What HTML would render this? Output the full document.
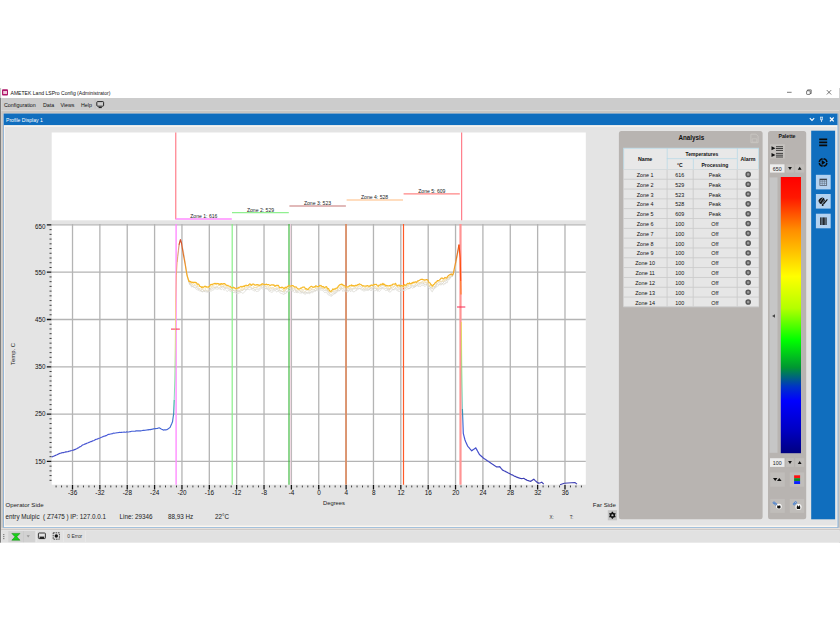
<!DOCTYPE html>
<html><head><meta charset="utf-8"><title>AMETEK Land LSPro Config (Administrator)</title>
<style>
html,body{margin:0;padding:0;background:#fff;}
body{width:840px;height:630px;position:relative;overflow:hidden;font-family:"Liberation Sans",sans-serif;}
.t{position:absolute;white-space:nowrap;}
.r{position:absolute;}
svg{position:absolute;left:0;top:0;}
</style></head><body>
<svg width="840" height="630" viewBox="0 0 840 630">
<rect x="0.00" y="88.00" width="840.00" height="455.00" fill="#ffffff"/>
<rect x="839.30" y="88.00" width="0.70" height="455.00" fill="#c0c0c0"/>
<rect x="0.00" y="88.00" width="1.10" height="9.80" fill="#c6c8c6"/>
<rect x="0.00" y="97.80" width="1.10" height="444.90" fill="#7e7e7e"/>
<g>
<rect x="2" y="89.3" width="6" height="6.3" rx="1" fill="#b0186a"/><rect x="3.2" y="91" width="3.8" height="3" fill="#f0c8dc"/>
</g>
<g fill="none" stroke="#222" stroke-width="0.6">
<path d="M787 92.3h4.6"/><rect x="806.6" y="90.8" width="3.6" height="3.6" rx="0.6"/><path d="M807.6 90.8v-0.9h3.6v3.6h-1"/><path d="M826.8 90.1l4.4 4.4M831.2 90.1l-4.4 4.4"/>
</g>
<rect x="1.20" y="98.00" width="838.80" height="12.00" fill="#cccccc"/>
<rect x="1.20" y="110.30" width="838.80" height="3.70" fill="#c9c6c3"/>
<rect x="94.80" y="99.00" width="0.50" height="10.00" fill="#b8b8b8"/>
<g fill="none" stroke="#111" stroke-width="0.9">
<rect x="96.8" y="101.6" width="6.8" height="4.6" rx="0.8"/><path d="M98.6 107.6h3.2" stroke-width="1"/>
</g>
<rect x="1.20" y="113.60" width="838.80" height="416.40" fill="#c9c6c3"/>
<rect x="3.20" y="113.80" width="835.20" height="414.20" fill="#7aaad8"/>
<rect x="3.90" y="113.80" width="833.60" height="413.40" fill="#fbf6f0"/>
<rect x="3.90" y="113.60" width="833.60" height="11.50" fill="#106ebe"/>
<rect x="4.80" y="126.80" width="832.00" height="398.80" fill="#e4e4e4"/>
<g fill="none" stroke="#fff" stroke-width="0.9">
<path d="M809.8 118.1l2.2 2.3l2.2-2.3" stroke-width="1.1"/><path d="M820 117.2h3M820.4 119.8h2.2M821.5 119.8v2.2M820.7 117.2v2.6M822.3 117.2v2.6" stroke-width="0.7"/><path d="M829.9 117.5l3.8 3.8M833.7 117.5l-3.8 3.8" stroke-width="1.2"/>
</g>
<rect x="51.70" y="132.50" width="534.10" height="87.80" fill="#fff"/>
<rect x="51.70" y="224.00" width="534.10" height="260.70" fill="#fff"/>
<g>
<defs><linearGradient id="pal" gradientUnits="userSpaceOnUse" x1="0" y1="225" x2="0" y2="484.7">
<stop offset="0" stop-color="#cc4028"/><stop offset="0.06" stop-color="#d24c2c"/><stop offset="0.135" stop-color="#ea8628"/><stop offset="0.19" stop-color="#f4aa26"/><stop offset="0.225" stop-color="#f7b726"/><stop offset="0.27" stop-color="#f5c230"/><stop offset="0.36" stop-color="#f0e040"/>
<stop offset="0.475" stop-color="#b0e840"/><stop offset="0.59" stop-color="#40d860"/><stop offset="0.69" stop-color="#30b0a0"/><stop offset="0.76" stop-color="#4070d0"/>
<stop offset="0.81" stop-color="#4858d8"/><stop offset="1" stop-color="#3c3cb0"/></linearGradient></defs>
<path d="M72.51 224V484.7M99.87 224V484.7M127.23 224V484.7M154.59 224V484.7M181.95 224V484.7M209.31 224V484.7M236.67 224V484.7M264.03 224V484.7M291.39 224V484.7M318.75 224V484.7M346.11 224V484.7M373.47 224V484.7M400.83 224V484.7M428.19 224V484.7M455.55 224V484.7M482.91 224V484.7M510.27 224V484.7M537.63 224V484.7M564.99 224V484.7M51.7 461.40H585.8M51.7 414.10H585.8M51.7 366.80H585.8M51.7 319.50H585.8M51.7 272.20H585.8M51.7 224.90H585.8" stroke="#b4b4b4" stroke-width="1.3" fill="none"/>
<path d="M56.09 485.5v1.9M61.57 485.5v1.9M67.04 485.5v1.9M77.98 485.5v1.9M83.45 485.5v1.9M88.93 485.5v1.9M94.40 485.5v1.9M105.34 485.5v1.9M110.81 485.5v1.9M116.29 485.5v1.9M121.76 485.5v1.9M132.70 485.5v1.9M138.17 485.5v1.9M143.65 485.5v1.9M149.12 485.5v1.9M160.06 485.5v1.9M165.53 485.5v1.9M171.01 485.5v1.9M176.48 485.5v1.9M187.42 485.5v1.9M192.89 485.5v1.9M198.37 485.5v1.9M203.84 485.5v1.9M214.78 485.5v1.9M220.25 485.5v1.9M225.73 485.5v1.9M231.20 485.5v1.9M242.14 485.5v1.9M247.61 485.5v1.9M253.09 485.5v1.9M258.56 485.5v1.9M269.50 485.5v1.9M274.97 485.5v1.9M280.45 485.5v1.9M285.92 485.5v1.9M296.86 485.5v1.9M302.33 485.5v1.9M307.81 485.5v1.9M313.28 485.5v1.9M324.22 485.5v1.9M329.69 485.5v1.9M335.17 485.5v1.9M340.64 485.5v1.9M351.58 485.5v1.9M357.05 485.5v1.9M362.53 485.5v1.9M368.00 485.5v1.9M378.94 485.5v1.9M384.41 485.5v1.9M389.89 485.5v1.9M395.36 485.5v1.9M406.30 485.5v1.9M411.77 485.5v1.9M417.25 485.5v1.9M422.72 485.5v1.9M433.66 485.5v1.9M439.13 485.5v1.9M444.61 485.5v1.9M450.08 485.5v1.9M461.02 485.5v1.9M466.49 485.5v1.9M471.97 485.5v1.9M477.44 485.5v1.9M488.38 485.5v1.9M493.85 485.5v1.9M499.33 485.5v1.9M504.80 485.5v1.9M515.74 485.5v1.9M521.21 485.5v1.9M526.69 485.5v1.9M532.16 485.5v1.9M543.10 485.5v1.9M548.57 485.5v1.9M554.05 485.5v1.9M559.52 485.5v1.9M570.46 485.5v1.9M575.93 485.5v1.9M581.41 485.5v1.9M49.5 229.63h2.1M49.5 234.36h2.1M49.5 239.09h2.1M49.5 243.82h2.1M49.5 248.55h2.1M49.5 253.28h2.1M49.5 258.01h2.1M49.5 262.74h2.1M49.5 267.47h2.1M49.5 276.93h2.1M49.5 281.66h2.1M49.5 286.39h2.1M49.5 291.12h2.1M49.5 295.85h2.1M49.5 300.58h2.1M49.5 305.31h2.1M49.5 310.04h2.1M49.5 314.77h2.1M49.5 324.23h2.1M49.5 328.96h2.1M49.5 333.69h2.1M49.5 338.42h2.1M49.5 343.15h2.1M49.5 347.88h2.1M49.5 352.61h2.1M49.5 357.34h2.1M49.5 362.07h2.1M49.5 371.53h2.1M49.5 376.26h2.1M49.5 380.99h2.1M49.5 385.72h2.1M49.5 390.45h2.1M49.5 395.18h2.1M49.5 399.91h2.1M49.5 404.64h2.1M49.5 409.37h2.1M49.5 418.83h2.1M49.5 423.56h2.1M49.5 428.29h2.1M49.5 433.02h2.1M49.5 437.75h2.1M49.5 442.48h2.1M49.5 447.21h2.1M49.5 451.94h2.1M49.5 456.67h2.1M49.5 466.13h2.1M49.5 470.86h2.1M49.5 475.59h2.1M49.5 480.32h2.1" stroke="#3c3c3c" stroke-width="1.0" fill="none"/>
<path d="M72.51 485v4.4M99.87 485v4.4M127.23 485v4.4M154.59 485v4.4M181.95 485v4.4M209.31 485v4.4M236.67 485v4.4M264.03 485v4.4M291.39 485v4.4M318.75 485v4.4M346.11 485v4.4M373.47 485v4.4M400.83 485v4.4M428.19 485v4.4M455.55 485v4.4M482.91 485v4.4M510.27 485v4.4M537.63 485v4.4M564.99 485v4.4M46.8 224.90h4.6M46.8 272.20h4.6M46.8 319.50h4.6M46.8 366.80h4.6M46.8 414.10h4.6M46.8 461.40h4.6" stroke="#111" stroke-width="1.3" fill="none"/>
<path d="M175.8 132.5V219.3" stroke="#ff5c6c" stroke-width="0.95"/>
<path d="M461.7 132.5V220.3" stroke="#ff5c6c" stroke-width="0.95"/>
<path d="M175.6 219H231.8" stroke="#ff8cff" stroke-width="1.3"/>
<path d="M232 212.6H288.8" stroke="#90f090" stroke-width="1.1"/>
<path d="M289.4 206H345.9" stroke="#c06c6c" stroke-width="0.95"/>
<path d="M346.6 200H403" stroke="#ffbc80" stroke-width="1.2"/>
<path d="M403.6 193.8H459.8" stroke="#ff8686" stroke-width="1.2"/>
<path d="M176.1 224V484.7" stroke="#ff8cff" stroke-width="1.4"/>
<path d="M232.2 224V484.7" stroke="#88f088" stroke-width="1.2"/>
<path d="M289 224V484.7" stroke="#3cb83c" stroke-width="1.15"/>
<path d="M290.7 224V484.7" stroke="#f4d2e2" stroke-width="0.9"/>
<path d="M346 224V484.7" stroke="#e08454" stroke-width="1.5"/>
<path d="M403.5 224V484.7" stroke="#ff5a28" stroke-width="1.2"/>
<path d="M460.5 224V484.7" stroke="#ff9494" stroke-width="2.2"/>
<path d="M171 329.1H179.8" stroke="#f83058" stroke-width="1.05"/>
<path d="M457 307H465.3" stroke="#f83058" stroke-width="1.05"/>
<path d="M189.0 282.9L189.9 284.0L190.7 285.3L191.6 287.2L192.6 286.5L193.5 286.7L194.4 287.3L195.4 288.1L196.3 289.5L197.3 289.8L198.2 290.2L199.2 290.7L200.0 291.1L200.9 290.6L201.7 291.1L202.5 292.1L203.3 291.7L204.1 290.8L204.9 291.8L205.7 291.8L206.5 292.0L207.3 292.2L208.1 292.1L209.0 291.5L209.9 291.6L210.8 290.9L211.7 291.1L212.6 289.8L213.5 290.1L214.4 288.6L215.3 288.8L216.3 289.0L217.2 289.3L218.2 289.0L219.0 288.4L219.9 289.2L220.8 289.3L221.6 289.7L222.5 288.6L223.3 289.0L224.2 290.4L225.0 289.4L225.9 290.3L226.7 291.0L227.6 291.4L228.4 290.4L229.3 290.8L230.3 290.8L231.2 292.2L232.2 291.4L233.0 292.4L233.9 292.6L234.8 292.5L235.6 292.6L236.5 294.0L237.3 293.7L238.2 293.1L239.0 293.6L239.9 292.3L240.7 292.6L241.6 292.3L242.4 293.3L243.3 293.0L244.3 292.1L245.2 291.5L246.2 289.8L247.1 289.5L248.1 289.3L249.1 289.7L250.0 289.8L250.9 288.9L251.8 289.3L252.7 290.3L253.6 290.4L254.5 291.2L255.4 290.2L256.3 291.6L257.2 291.4L258.0 291.3L258.9 290.9L259.7 289.8L260.6 288.9L261.4 288.5L262.3 288.8L263.1 289.1L264.0 287.8L264.9 288.0L265.7 289.1L266.6 288.8L267.5 289.4L268.4 290.1L269.2 291.5L270.1 291.3L270.9 292.4L271.8 292.1L272.6 292.2L273.5 290.6L274.3 290.8L275.2 290.4L276.0 291.6L276.9 292.1L277.7 290.9L278.6 291.0L279.5 292.1L280.4 293.2L281.3 293.5L282.2 293.7L283.1 294.0L284.0 294.7L284.9 292.9L285.8 293.7L286.7 291.9L287.7 291.9L288.6 291.6L289.5 291.2L290.4 290.1L291.2 290.4L292.1 291.0L292.9 291.2L293.8 292.2L294.6 292.4L295.5 292.1L296.3 291.9L297.2 292.8L298.0 292.6L298.8 292.3L299.6 293.2L300.4 292.8L301.2 293.5L302.0 292.1L302.9 293.3L303.7 293.4L304.5 293.9L305.3 294.5L306.1 292.6L306.9 293.6L307.7 293.2L308.5 293.3L309.3 293.9L310.1 292.8L310.9 293.0L311.8 292.5L312.6 292.9L313.4 291.8L314.2 291.1L315.0 291.5L315.8 291.2L316.6 289.6L317.5 291.0L318.4 290.8L319.2 290.6L320.0 290.5L320.9 289.8L321.8 290.4L322.7 290.6L323.6 291.5L324.5 292.5L325.4 292.4L326.3 292.5L327.2 293.2L328.1 294.8L329.1 295.0L330.1 295.7L331.0 296.3L331.9 296.0L332.7 295.4L333.6 294.0L334.4 293.7L335.2 293.7L336.1 293.1L337.0 292.2L337.8 291.4L338.6 290.6L339.5 291.0L340.4 289.9L341.2 289.1L342.1 289.8L342.9 291.6L343.8 290.5L344.6 291.4L345.4 291.1L346.3 291.6L347.1 292.1L348.0 292.0L348.8 290.7L349.7 290.3L350.5 291.8L351.4 290.8L352.2 290.2L353.1 292.1L353.9 291.6L354.8 291.7L355.7 290.3L356.6 290.6L357.5 289.5L358.4 288.9L359.3 288.2L360.2 288.9L361.0 289.3L361.8 290.4L362.6 289.8L363.4 291.1L364.2 290.8L365.0 291.1L365.8 290.4L366.7 290.4L367.5 290.5L368.4 290.6L369.2 289.2L370.1 290.3L370.9 290.3L371.8 290.5L372.6 289.3L373.5 289.8L374.3 290.9L375.1 290.9L376.0 290.2L376.9 289.8L377.7 291.5L378.6 290.8L379.4 291.4L380.2 290.7L381.1 289.8L381.9 287.9L382.8 288.9L383.7 288.9L384.6 289.4L385.5 290.6L386.4 290.5L387.3 289.9L388.2 291.0L389.1 292.0L390.0 292.0L390.9 291.7L391.8 290.3L392.8 289.6L393.7 289.8L394.6 289.9L395.5 288.5L396.4 290.2L397.2 290.9L398.1 290.2L398.9 291.9L399.8 290.9L400.6 292.1L401.4 291.2L402.3 291.4L403.1 290.3L404.0 290.8L404.8 290.8L405.7 289.9L406.5 289.6L407.4 288.9L408.2 289.0L409.0 288.3L409.9 288.6L410.7 287.8L411.6 287.4L412.4 288.3L413.3 288.0L414.1 287.0L415.0 286.6L415.8 286.4L416.6 285.7L417.5 285.7L418.3 286.6L419.2 285.9L420.0 286.6L420.9 286.3L421.7 284.9L422.6 285.5L423.4 285.0L424.3 286.3L425.3 286.2L426.2 285.4L427.2 285.0L428.1 286.9L428.9 287.4L429.8 289.0L430.6 288.8L431.4 291.2L432.3 291.9L433.1 290.0L434.0 289.3L434.9 287.4L435.7 288.0L436.5 286.0L437.4 286.2L438.3 286.0L439.3 284.4L440.2 284.7L441.2 285.1L442.0 283.6L442.9 284.6L443.7 285.0L444.6 283.2L445.4 284.1L446.2 282.3L447.1 283.0L447.9 280.6L448.8 279.5L449.7 279.1L450.6 277.0L451.4 276.5L452.3 276.4L453.2 274.7" stroke="#dedcd6" stroke-width="0.9" fill="none" opacity="0.9"/>
<path d="M189.0 282.6L189.9 283.0L190.7 284.3L191.6 286.1L192.6 286.1L193.5 287.3L194.4 287.4L195.4 287.3L196.3 287.0L197.3 288.4L198.2 289.3L199.2 289.4L200.0 290.3L200.9 291.0L201.7 291.3L202.5 291.6L203.3 290.7L204.1 291.0L204.9 291.5L205.7 290.4L206.5 291.2L207.3 291.4L208.1 291.8L209.0 291.1L209.9 289.7L210.8 289.7L211.7 289.1L212.6 288.4L213.5 288.0L214.4 287.4L215.3 288.2L216.3 286.6L217.2 287.5L218.2 288.1L219.0 287.5L219.9 287.8L220.8 288.3L221.6 286.4L222.5 287.0L223.3 286.5L224.2 288.1L225.0 288.7L225.9 288.3L226.7 288.3L227.6 288.8L228.4 288.8L229.3 289.8L230.3 289.5L231.2 289.9L232.2 290.9L233.0 290.4L233.9 290.5L234.8 291.5L235.6 290.8L236.5 292.0L237.3 291.4L238.2 292.1L239.0 291.0L239.9 292.0L240.7 291.5L241.6 290.5L242.4 290.5L243.3 289.9L244.3 289.2L245.2 289.7L246.2 289.4L247.1 289.2L248.1 288.1L249.1 287.2L250.0 287.2L250.9 288.4L251.8 288.8L252.7 288.6L253.6 288.3L254.5 289.9L255.4 289.6L256.3 289.1L257.2 289.1L258.0 289.2L258.9 289.1L259.7 288.5L260.6 287.8L261.4 287.4L262.3 287.2L263.1 287.6L264.0 286.7L264.9 288.1L265.7 288.4L266.6 288.6L267.5 288.8L268.4 289.0L269.2 290.0L270.1 290.1L270.9 290.7L271.8 289.7L272.6 290.3L273.5 289.0L274.3 289.8L275.2 289.8L276.0 290.1L276.9 289.0L277.7 289.1L278.6 290.9L279.5 290.4L280.4 291.0L281.3 291.3L282.2 291.7L283.1 291.7L284.0 292.5L284.9 291.7L285.8 290.8L286.7 291.7L287.7 291.3L288.6 289.8L289.5 290.5L290.4 289.7L291.2 289.8L292.1 289.0L292.9 290.7L293.8 290.6L294.6 289.5L295.5 290.0L296.3 292.3L297.2 291.6L298.0 291.6L298.8 290.8L299.6 290.7L300.4 290.8L301.2 292.2L302.0 292.0L302.9 291.9L303.7 292.8L304.5 293.0L305.3 291.7L306.1 292.6L306.9 292.7L307.7 292.7L308.5 292.4L309.3 292.5L310.1 292.5L310.9 292.0L311.8 290.9L312.6 291.5L313.4 291.1L314.2 290.9L315.0 290.3L315.8 290.6L316.6 289.7L317.5 288.9L318.4 289.0L319.2 288.4L320.0 289.5L320.9 288.3L321.8 288.9L322.7 288.6L323.6 290.2L324.5 290.4L325.4 290.5L326.3 291.1L327.2 289.9L328.1 292.6L329.1 293.1L330.1 294.3L331.0 295.4L331.9 294.6L332.7 293.5L333.6 292.9L334.4 293.6L335.2 291.9L336.1 292.5L337.0 291.2L337.8 290.1L338.6 290.8L339.5 290.6L340.4 289.7L341.2 287.9L342.1 289.0L342.9 288.3L343.8 289.2L344.6 290.5L345.4 289.5L346.3 291.1L347.1 290.9L348.0 290.0L348.8 290.3L349.7 289.2L350.5 289.8L351.4 289.6L352.2 289.9L353.1 289.0L353.9 288.9L354.8 288.7L355.7 288.7L356.6 289.4L357.5 288.2L358.4 288.8L359.3 288.5L360.2 288.3L361.0 288.5L361.8 289.0L362.6 289.4L363.4 289.2L364.2 289.7L365.0 289.6L365.8 289.2L366.7 289.3L367.5 289.5L368.4 289.1L369.2 289.7L370.1 287.8L370.9 289.2L371.8 288.9L372.6 287.8L373.5 287.2L374.3 288.4L375.1 288.6L376.0 288.5L376.9 290.0L377.7 289.8L378.6 289.8L379.4 289.1L380.2 288.9L381.1 287.9L381.9 287.9L382.8 287.2L383.7 288.2L384.6 288.2L385.5 288.5L386.4 288.5L387.3 289.7L388.2 289.4L389.1 290.6L390.0 288.8L390.9 289.1L391.8 288.7L392.8 289.7L393.7 289.5L394.6 288.5L395.5 287.5L396.4 288.6L397.2 289.4L398.1 288.9L398.9 289.3L399.8 289.2L400.6 289.7L401.4 289.2L402.3 289.7L403.1 289.7L404.0 289.8L404.8 288.5L405.7 288.7L406.5 287.5L407.4 287.5L408.2 288.5L409.0 288.1L409.9 288.4L410.7 287.1L411.6 285.9L412.4 286.0L413.3 286.6L414.1 287.0L415.0 287.0L415.8 285.5L416.6 285.2L417.5 284.8L418.3 285.5L419.2 284.2L420.0 284.0L420.9 284.0L421.7 283.5L422.6 284.1L423.4 283.0L424.3 284.8L425.3 284.0L426.2 284.9L427.2 283.6L428.1 284.2L428.9 286.2L429.8 286.5L430.6 287.9L431.4 287.9L432.3 288.4L433.1 289.3L434.0 288.4L434.9 287.2L435.7 286.6L436.5 284.1L437.4 284.0L438.3 284.4L439.3 283.8L440.2 284.3L441.2 282.6L442.0 283.5L442.9 283.5L443.7 282.2L444.6 281.4L445.4 281.9L446.2 281.2L447.1 279.5L447.9 279.4L448.8 279.2L449.7 277.4L450.6 277.8L451.4 276.3L452.3 274.4L453.2 274.4" stroke="#d8d4c8" stroke-width="0.9" fill="none" opacity="0.9"/>
<path d="M189.0 283.1L189.9 283.5L190.7 283.3L191.6 283.7L192.6 285.1L193.5 285.4L194.4 285.5L195.4 285.5L196.3 286.3L197.3 286.2L198.2 287.7L199.2 289.0L200.0 288.4L200.9 289.5L201.7 290.0L202.5 288.6L203.3 290.3L204.1 290.6L204.9 290.0L205.7 289.6L206.5 290.4L207.3 290.3L208.1 290.2L209.0 290.4L209.9 289.3L210.8 287.9L211.7 287.7L212.6 287.0L213.5 286.8L214.4 287.2L215.3 287.2L216.3 287.3L217.2 286.6L218.2 286.1L219.0 284.8L219.9 285.8L220.8 286.8L221.6 287.2L222.5 286.5L223.3 286.2L224.2 287.2L225.0 287.2L225.9 287.8L226.7 287.1L227.6 287.5L228.4 288.2L229.3 288.0L230.3 288.7L231.2 290.7L232.2 290.4L233.0 290.3L233.9 290.1L234.8 290.9L235.6 290.8L236.5 291.2L237.3 290.4L238.2 290.8L239.0 290.2L239.9 290.8L240.7 290.0L241.6 289.9L242.4 290.3L243.3 289.7L244.3 288.8L245.2 288.5L246.2 287.4L247.1 288.3L248.1 287.1L249.1 286.4L250.0 286.8L250.9 286.6L251.8 287.8L252.7 288.4L253.6 287.7L254.5 287.6L255.4 287.7L256.3 287.8L257.2 286.8L258.0 286.9L258.9 286.6L259.7 286.8L260.6 286.6L261.4 286.3L262.3 285.6L263.1 284.8L264.0 286.1L264.9 286.8L265.7 286.5L266.6 287.2L267.5 288.1L268.4 287.4L269.2 288.9L270.1 288.8L270.9 288.9L271.8 288.5L272.6 288.0L273.5 288.4L274.3 288.6L275.2 288.4L276.0 288.7L276.9 288.2L277.7 288.7L278.6 288.1L279.5 289.5L280.4 290.9L281.3 290.4L282.2 291.6L283.1 291.3L284.0 290.9L284.9 291.3L285.8 289.5L286.7 289.5L287.7 287.9L288.6 287.6L289.5 288.9L290.4 287.6L291.2 287.7L292.1 288.8L292.9 288.4L293.8 289.3L294.6 288.5L295.5 288.6L296.3 290.7L297.2 290.3L298.0 289.7L298.8 290.2L299.6 290.7L300.4 291.2L301.2 290.9L302.0 291.2L302.9 290.8L303.7 291.0L304.5 291.8L305.3 291.3L306.1 290.9L306.9 290.4L307.7 290.7L308.5 290.9L309.3 291.4L310.1 290.0L310.9 290.3L311.8 289.0L312.6 290.1L313.4 289.6L314.2 289.6L315.0 289.3L315.8 288.1L316.6 288.2L317.5 289.2L318.4 289.2L319.2 288.4L320.0 288.0L320.9 288.3L321.8 288.1L322.7 288.7L323.6 288.2L324.5 288.5L325.4 289.3L326.3 289.2L327.2 289.4L328.1 290.8L329.1 292.2L330.1 292.1L331.0 293.2L331.9 292.1L332.7 291.4L333.6 291.3L334.4 291.2L335.2 291.2L336.1 290.2L337.0 291.1L337.8 289.0L338.6 289.2L339.5 288.3L340.4 288.5L341.2 287.1L342.1 287.7L342.9 288.6L343.8 287.2L344.6 287.9L345.4 288.9L346.3 289.2L347.1 289.4L348.0 288.9L348.8 288.2L349.7 289.3L350.5 288.6L351.4 288.2L352.2 289.0L353.1 288.1L353.9 288.0L354.8 287.9L355.7 287.2L356.6 288.5L357.5 287.6L358.4 286.9L359.3 286.1L360.2 286.3L361.0 287.1L361.8 287.2L362.6 288.0L363.4 288.2L364.2 289.1L365.0 288.7L365.8 288.1L366.7 288.2L367.5 288.5L368.4 287.2L369.2 287.2L370.1 287.6L370.9 287.1L371.8 287.6L372.6 288.7L373.5 287.9L374.3 287.4L375.1 287.4L376.0 288.3L376.9 288.6L377.7 288.7L378.6 289.1L379.4 287.9L380.2 287.1L381.1 286.0L381.9 285.5L382.8 285.1L383.7 286.2L384.6 286.2L385.5 286.3L386.4 287.6L387.3 288.5L388.2 288.2L389.1 289.8L390.0 288.5L390.9 287.0L391.8 287.7L392.8 288.2L393.7 286.7L394.6 286.6L395.5 285.0L396.4 286.3L397.2 287.7L398.1 287.5L398.9 287.9L399.8 287.9L400.6 289.1L401.4 289.2L402.3 288.4L403.1 288.3L404.0 287.4L404.8 288.3L405.7 287.3L406.5 287.1L407.4 285.8L408.2 286.0L409.0 286.6L409.9 285.7L410.7 285.7L411.6 285.3L412.4 285.0L413.3 285.8L414.1 285.1L415.0 285.5L415.8 283.6L416.6 283.0L417.5 284.5L418.3 283.4L419.2 283.6L420.0 282.8L420.9 282.6L421.7 282.1L422.6 281.9L423.4 283.1L424.3 282.9L425.3 282.3L426.2 283.0L427.2 283.4L428.1 284.0L428.9 285.8L429.8 286.3L430.6 287.5L431.4 287.7L432.3 288.3L433.1 287.3L434.0 286.4L434.9 286.6L435.7 285.4L436.5 283.5L437.4 283.5L438.3 282.5L439.3 282.0L440.2 281.7L441.2 281.7L442.0 281.0L442.9 281.9L443.7 281.5L444.6 280.7L445.4 280.4L446.2 279.4L447.1 278.7L447.9 278.4L448.8 277.3L449.7 277.3L450.6 275.9L451.4 275.3L452.3 274.5L453.2 273.9" stroke="#e2d6b8" stroke-width="0.9" fill="none" opacity="0.9"/>
<path d="M189.0 283.1L189.9 281.9L190.7 282.7L191.6 283.7L192.6 283.8L193.5 283.4L194.4 284.6L195.4 283.9L196.3 284.6L197.3 285.4L198.2 286.0L199.2 286.3L200.0 286.5L200.9 286.6L201.7 287.2L202.5 288.1L203.3 288.1L204.1 287.4L204.9 288.4L205.7 287.9L206.5 287.3L207.3 288.0L208.1 288.1L209.0 287.6L209.9 287.3L210.8 286.7L211.7 287.0L212.6 285.3L213.5 285.3L214.4 285.2L215.3 284.2L216.3 285.1L217.2 284.1L218.2 285.0L219.0 285.6L219.9 284.9L220.8 285.2L221.6 285.1L222.5 284.5L223.3 285.8L224.2 286.1L225.0 285.3L225.9 286.5L226.7 285.7L227.6 285.8L228.4 287.0L229.3 287.4L230.3 287.7L231.2 287.3L232.2 288.9L233.0 287.7L233.9 288.5L234.8 288.7L235.6 288.5L236.5 289.5L237.3 288.8L238.2 288.8L239.0 289.0L239.9 288.3L240.7 289.6L241.6 288.9L242.4 289.4L243.3 288.0L244.3 288.2L245.2 287.5L246.2 285.9L247.1 286.4L248.1 285.1L249.1 285.5L250.0 285.0L250.9 285.3L251.8 285.0L252.7 285.5L253.6 286.3L254.5 287.5L255.4 287.5L256.3 286.9L257.2 287.6L258.0 285.9L258.9 286.1L259.7 285.9L260.6 284.9L261.4 286.2L262.3 285.4L263.1 284.4L264.0 284.3L264.9 285.3L265.7 286.0L266.6 286.4L267.5 285.9L268.4 286.3L269.2 286.5L270.1 287.8L270.9 287.3L271.8 288.0L272.6 287.7L273.5 287.6L274.3 286.7L275.2 286.1L276.0 287.2L276.9 286.7L277.7 287.0L278.6 287.4L279.5 288.2L280.4 287.5L281.3 288.2L282.2 288.9L283.1 290.0L284.0 291.2L284.9 290.2L285.8 288.4L286.7 288.3L287.7 288.6L288.6 287.3L289.5 286.9L290.4 286.7L291.2 286.2L292.1 287.1L292.9 287.3L293.8 288.4L294.6 287.8L295.5 287.1L296.3 287.6L297.2 288.2L298.0 289.4L298.8 289.5L299.6 288.8L300.4 288.5L301.2 289.2L302.0 289.3L302.9 289.8L303.7 289.8L304.5 289.4L305.3 288.4L306.1 290.0L306.9 289.5L307.7 289.2L308.5 289.7L309.3 290.3L310.1 288.7L310.9 288.5L311.8 288.9L312.6 287.5L313.4 287.5L314.2 287.6L315.0 287.0L315.8 287.7L316.6 287.1L317.5 288.0L318.4 287.4L319.2 286.2L320.0 287.3L320.9 287.2L321.8 287.7L322.7 288.4L323.6 288.4L324.5 288.6L325.4 288.2L326.3 287.9L327.2 289.1L328.1 290.1L329.1 290.9L330.1 291.3L331.0 291.3L331.9 292.0L332.7 291.7L333.6 290.5L334.4 290.0L335.2 289.2L336.1 289.0L337.0 288.7L337.8 287.4L338.6 287.1L339.5 287.0L340.4 287.0L341.2 285.8L342.1 285.8L342.9 286.3L343.8 286.6L344.6 287.3L345.4 286.8L346.3 287.1L347.1 288.5L348.0 287.6L348.8 287.8L349.7 288.2L350.5 287.1L351.4 286.6L352.2 286.3L353.1 286.5L353.9 286.2L354.8 286.7L355.7 286.1L356.6 287.0L357.5 285.8L358.4 286.2L359.3 285.5L360.2 284.6L361.0 285.0L361.8 285.7L362.6 286.4L363.4 285.5L364.2 287.3L365.0 287.3L365.8 287.4L366.7 286.3L367.5 287.2L368.4 287.6L369.2 285.9L370.1 285.8L370.9 285.3L371.8 285.1L372.6 285.3L373.5 285.8L374.3 285.9L375.1 286.6L376.0 286.5L376.9 287.7L377.7 288.3L378.6 287.1L379.4 285.6L380.2 285.8L381.1 285.4L381.9 285.0L382.8 284.2L383.7 285.5L384.6 285.8L385.5 285.6L386.4 286.1L387.3 287.0L388.2 287.4L389.1 288.7L390.0 288.2L390.9 288.3L391.8 286.4L392.8 285.9L393.7 286.6L394.6 285.8L395.5 285.0L396.4 286.0L397.2 285.7L398.1 286.1L398.9 286.7L399.8 286.1L400.6 287.8L401.4 287.2L402.3 287.5L403.1 287.5L404.0 286.9L404.8 287.2L405.7 285.8L406.5 286.8L407.4 285.5L408.2 285.8L409.0 284.2L409.9 284.5L410.7 284.8L411.6 283.7L412.4 283.1L413.3 283.6L414.1 282.8L415.0 283.2L415.8 282.0L416.6 282.9L417.5 282.5L418.3 282.1L419.2 282.5L420.0 282.7L420.9 282.8L421.7 282.2L422.6 281.3L423.4 282.0L424.3 281.3L425.3 282.1L426.2 282.2L427.2 282.4L428.1 282.7L428.9 284.6L429.8 286.0L430.6 285.5L431.4 285.8L432.3 287.1L433.1 286.9L434.0 284.5L434.9 283.2L435.7 282.7L436.5 282.1L437.4 281.6L438.3 281.2L439.3 282.2L440.2 280.8L441.2 281.5L442.0 280.7L442.9 280.6L443.7 281.0L444.6 279.5L445.4 279.7L446.2 279.2L447.1 277.7L447.9 278.2L448.8 277.0L449.7 275.9L450.6 275.5L451.4 275.5L452.3 275.1L453.2 273.6" stroke="#f4dca0" stroke-width="0.9" fill="none" opacity="0.9"/>
<path d="M177.3 262L179.4 244L181 240.5L183.6 252L186 268L188.4 281L190 285" stroke="#d8d4cc" stroke-width="0.9" fill="none"/>
<path d="M452 277L455 270L457.4 255L459 246.5" stroke="#d8d0c0" stroke-width="0.9" fill="none"/>
<path d="M51.7 456.9L52.5 456.7L53.2 456.2L54.0 456.1L54.7 455.7L55.5 455.4L56.2 455.0L57.0 454.7L57.7 454.4L58.5 453.9L59.2 453.7L60.0 453.2L60.7 453.2L61.5 452.9L62.2 452.8L62.9 452.6L63.7 452.6L64.4 452.2L65.1 452.1L65.9 451.9L66.6 451.9L67.4 451.8L68.1 451.6L68.8 451.3L69.6 451.1L70.3 450.9L71.0 450.7L71.8 450.5L72.5 450.3L73.2 450.2L73.9 449.9L74.6 449.6L75.3 449.4L76.0 449.0L76.7 448.7L77.4 448.2L78.2 447.9L78.9 447.5L79.6 446.9L80.4 446.6L81.1 446.2L81.8 445.6L82.6 445.1L83.3 444.7L84.0 444.5L84.7 444.1L85.4 443.9L86.1 443.6L86.8 443.3L87.5 443.0L88.2 442.8L88.9 442.4L89.6 442.2L90.3 441.8L91.0 441.6L91.7 441.4L92.5 440.9L93.2 440.7L94.0 440.5L94.7 440.1L95.5 439.6L96.2 439.3L97.0 439.2L97.7 438.7L98.5 438.6L99.2 438.2L100.0 438.0L100.8 437.6L101.5 437.2L102.3 437.0L103.0 436.6L103.8 436.3L104.5 436.1L105.3 435.9L106.0 435.6L106.8 435.4L107.5 434.8L108.3 434.4L109.0 434.4L109.7 434.3L110.4 434.0L111.1 433.9L111.8 433.7L112.5 433.6L113.2 433.3L113.9 433.1L114.6 433.2L115.3 433.0L116.0 433.0L116.7 432.7L117.4 432.7L118.1 432.6L118.8 432.5L119.6 432.4L120.3 432.5L121.0 432.3L121.7 432.4L122.4 432.3L123.1 432.2L123.8 432.1L124.6 432.1L125.3 432.2L126.0 432.1L126.7 431.9L127.4 432.0L128.1 432.0L128.8 432.0L129.6 431.7L130.3 431.6L131.0 431.5L131.7 431.3L132.4 431.2L133.1 431.2L133.8 431.2L134.6 431.2L135.3 431.1L136.0 430.9L136.7 430.9L137.4 430.9L138.1 430.9L138.8 430.8L139.6 430.8L140.3 430.8L141.0 430.8L141.7 430.7L142.4 430.5L143.1 430.4L143.8 430.3L144.6 430.3L145.3 430.2L146.0 430.1L146.7 430.0L147.5 429.8L148.2 429.9L149.0 429.6L149.7 429.5L150.5 429.6L151.2 429.3L152.0 429.3L152.7 429.1L153.5 428.9L154.2 428.8L155.0 428.6L155.8 428.6L156.7 428.5L157.5 428.4L158.4 428.0L159.2 427.8L160.0 428.2L160.8 428.7L161.7 429.2L162.5 429.5L163.3 430.1L164.2 429.8L165.0 429.9L165.8 429.9L166.7 429.8L167.5 429.2L168.3 428.8L169.2 428.1L170.0 427.6L170.8 425.7L171.7 423.7L172.5 421.8L173.7 413.3L174.2 400.0" stroke="url(#pal)" stroke-width="1.15" fill="none" stroke-linejoin="round"/>
<path d="M174.2 400.0L174.8 380.0L175.3 340.1L175.7 301.0L176.3 275.8L177.6 256.7L178.3 250.8L179.0 245.0" stroke="url(#pal)" stroke-width="1.0" fill="none" stroke-linejoin="round" opacity="0.6"/>
<path d="M179.0 245.0L179.7 242.2L180.4 239.7L181.5 243.0L182.7 250.5L183.5 255.1L184.4 259.8L185.2 264.3L186.1 270.0L187.1 275.8L188.1 278.7L189.0 281.5L189.0 281.2L189.7 281.1L190.3 282.0L190.9 281.7L191.6 282.4L192.2 282.5L192.9 282.1L193.5 282.6L194.1 282.2L194.8 282.6L195.4 282.3L196.0 282.5L196.7 283.2L197.3 284.3L197.9 284.1L198.6 284.2L199.2 285.0L199.8 286.2L200.4 286.6L201.1 286.7L201.7 287.8L202.3 286.8L203.0 287.4L203.6 287.0L204.3 286.5L204.9 286.2L205.5 286.3L206.2 287.1L206.8 286.7L207.5 287.0L208.1 287.3L208.7 286.7L209.4 286.5L210.0 285.5L210.6 284.7L211.2 284.4L211.9 284.7L212.5 284.4L213.1 283.9L213.8 283.9L214.4 283.5L215.0 283.3L215.7 283.8L216.3 284.0L216.9 283.4L217.6 283.5L218.2 283.5L218.8 284.1L219.5 284.3L220.1 283.7L220.8 284.5L221.4 283.7L222.0 283.7L222.7 284.2L223.3 283.6L223.9 283.9L224.6 283.5L225.2 284.2L225.9 284.9L226.5 285.1L227.1 285.7L227.8 285.3L228.4 285.7L229.0 286.0L229.7 286.3L230.3 286.4L230.9 287.2L231.6 287.9L232.2 287.8L232.8 287.9L233.5 287.1L234.1 287.7L234.8 287.9L235.4 288.7L236.0 288.9L236.7 288.3L237.3 288.1L237.9 288.3L238.6 287.4L239.2 287.5L239.9 287.1L240.5 286.7L241.1 286.4L241.8 287.2L242.4 286.7L243.0 286.3L243.7 286.1L244.3 286.6L244.9 285.5L245.6 285.3L246.2 285.1L246.8 285.6L247.5 285.6L248.1 285.7L248.7 284.7L249.4 284.3L250.0 283.8L250.6 284.6L251.3 285.3L251.9 284.6L252.5 284.2L253.2 284.2L253.8 284.2L254.4 284.7L255.0 285.2L255.7 285.1L256.3 284.7L256.9 284.8L257.6 284.7L258.2 284.8L258.9 285.4L259.5 285.3L260.1 284.9L260.8 284.8L261.4 284.7L262.1 283.6L262.7 284.2L263.4 284.2L264.0 284.4L264.6 284.7L265.2 284.5L265.8 284.4L266.4 284.1L267.1 284.8L267.7 284.5L268.3 284.5L268.9 284.8L269.5 285.0L270.1 285.6L270.7 285.2L271.4 284.9L272.0 284.9L272.6 284.9L273.3 285.2L273.9 284.8L274.5 285.9L275.2 286.1L275.8 285.5L276.4 285.3L277.1 285.3L277.7 285.3L278.3 285.3L279.0 286.5L279.6 287.6L280.2 287.5L280.9 287.7L281.5 287.3L282.1 287.2L282.7 287.6L283.4 287.9L284.0 289.0L284.6 288.1L285.3 287.2L285.9 287.9L286.6 287.6L287.2 286.6L287.8 286.5L288.5 285.5L289.1 285.5L289.8 286.0L290.4 286.0L291.0 286.2L291.7 285.7L292.3 285.7L292.9 285.5L293.6 286.3L294.2 286.6L294.8 287.2L295.5 287.0L296.1 286.8L296.7 287.6L297.4 288.4L298.0 288.8L298.6 288.9L299.3 289.0L299.9 289.0L300.5 288.2L301.2 288.2L301.8 287.9L302.4 287.3L303.1 287.0L303.7 287.1L304.4 287.2L305.0 288.0L305.6 288.8L306.3 288.6L306.9 289.2L307.5 289.4L308.2 289.4L308.8 288.5L309.4 287.7L310.1 287.1L310.7 286.6L311.4 286.3L312.0 286.6L312.6 287.2L313.3 287.4L313.9 286.9L314.5 286.7L315.2 286.8L315.8 285.7L316.4 286.0L317.1 286.5L317.7 286.6L318.4 286.6L319.0 286.1L319.6 285.4L320.3 285.9L320.9 285.4L321.5 286.1L322.2 286.9L322.8 286.6L323.4 286.5L324.0 287.4L324.7 287.7L325.3 287.1L325.9 286.8L326.6 286.7L327.2 287.9L327.8 288.8L328.5 288.6L329.1 289.8L329.7 290.9L330.4 291.3L331.0 291.3L331.6 290.8L332.3 289.8L332.9 288.8L333.6 289.5L334.2 289.3L334.8 288.8L335.5 289.0L336.1 288.2L336.7 288.2L337.4 288.0L338.0 286.7L338.6 285.9L339.3 285.3L339.9 284.7L340.6 284.7L341.2 284.1L341.8 284.4L342.5 284.3L343.1 285.4L343.8 285.4L344.4 285.6L345.0 286.1L345.7 286.9L346.3 286.8L346.9 287.2L347.6 286.9L348.2 286.7L348.8 286.5L349.5 285.7L350.1 285.8L350.7 285.4L351.4 284.9L352.0 285.8L352.6 285.4L353.3 285.5L353.9 286.0L354.5 285.9L355.2 285.4L355.8 285.3L356.4 285.3L357.0 285.5L357.7 284.6L358.3 284.7L358.9 284.2L359.6 283.9L360.2 284.3L360.8 284.5L361.4 284.8L362.0 285.4L362.6 286.0L363.2 285.8L363.8 285.9L364.4 286.0L365.0 286.1L365.6 286.2L366.3 285.9L366.9 285.7L367.5 285.5L368.2 286.1L368.8 286.0L369.4 286.1L370.1 286.3L370.7 285.3L371.3 285.1L372.0 285.6L372.6 285.6L373.2 284.8L373.9 284.4L374.5 284.7L375.1 284.4L375.8 284.5L376.4 284.4L377.1 285.3L377.7 286.0L378.3 286.3L379.0 285.1L379.6 285.2L380.2 285.0L380.9 284.0L381.5 284.3L382.2 284.6L382.8 283.4L383.4 284.4L384.1 284.2L384.7 284.4L385.3 285.4L386.0 285.9L386.6 285.3L387.2 285.5L387.8 285.9L388.5 285.9L389.1 285.9L389.7 285.6L390.4 286.0L391.0 285.0L391.7 285.1L392.3 284.9L392.9 284.1L393.6 284.0L394.2 284.2L394.9 284.1L395.5 283.3L396.1 284.6L396.8 285.2L397.4 286.0L398.1 285.3L398.7 285.2L399.3 285.0L400.0 286.1L400.6 286.1L401.2 285.5L401.9 285.5L402.5 286.1L403.1 286.3L403.8 285.5L404.4 284.7L405.0 285.4L405.7 285.1L406.3 285.1L406.9 284.1L407.6 283.3L408.2 283.8L408.8 283.6L409.5 282.8L410.1 283.6L410.7 283.6L411.4 283.7L412.0 282.7L412.6 283.1L413.3 282.1L413.9 282.6L414.5 282.3L415.2 281.8L415.8 281.8L416.4 282.3L417.1 281.6L417.7 280.9L418.3 281.0L419.0 280.6L419.6 280.1L420.2 279.8L420.9 279.4L421.5 279.4L422.1 279.4L422.8 279.4L423.4 280.0L424.0 279.9L424.7 280.2L425.3 279.9L425.9 280.0L426.6 279.6L427.2 279.8L427.8 280.1L428.5 281.6L429.1 282.5L429.8 282.8L430.4 283.6L431.0 285.0L431.7 284.9L432.3 286.2L432.9 285.3L433.6 284.5L434.2 284.3L434.9 283.2L435.5 282.4L436.1 282.0L436.8 281.8L437.4 280.5L438.0 280.7L438.7 280.5L439.3 280.2L439.9 279.6L440.6 279.0L441.2 278.2L441.8 278.1L442.4 278.0L443.1 279.0L443.7 278.9L444.3 278.2L445.0 277.4L445.6 277.9L446.2 278.1L446.9 277.7L447.5 276.6L448.2 275.8L448.8 275.2L449.4 275.0L450.1 274.4L450.7 274.4L451.3 273.9L451.9 274.6L452.6 275.0L453.2 273.8L453.2 273.8L455.8 261.7L459.0 244.6" stroke="url(#pal)" stroke-width="1.2" fill="none" stroke-linejoin="round"/>
<path d="M459 244.6L460.2 258L460.7 281" stroke="#ff5010" stroke-width="1.25" fill="none" stroke-linejoin="round"/>
<path d="M460.7 281L460.95 294.5" stroke="#ff8030" stroke-width="1.25" fill="none"/>
<path d="M461.4 322L461.7 362L462 385L462.4 409" stroke="url(#pal)" stroke-width="0.9" fill="none" opacity="0.75"/>
<path d="M462.4 409.0L462.7 416.7L463.3 433.3L464.1 436.6L465.0 440.0L465.8 441.9L466.7 443.9L467.5 445.8L468.3 446.8L469.2 447.8L470.0 448.8L470.9 449.8L471.7 450.8L472.5 450.2L473.3 449.6L474.2 449.0L475.0 448.4L475.8 447.8L476.6 449.4L477.5 451.0L478.4 452.6L479.2 454.2L480.0 455.0L480.8 455.7L481.7 456.5L482.5 457.2L483.3 458.0L484.0 458.5L484.8 459.0L485.5 459.5L486.3 460.0L487.0 460.5L487.8 461.0L488.5 461.5L489.3 462.0L490.0 462.5L490.7 463.0L491.5 463.5L492.2 464.0L493.0 464.5L493.7 465.0L494.5 465.5L495.2 466.0L496.0 466.5L496.7 467.0L497.4 466.9L498.2 466.9L498.9 466.8L499.7 466.7L500.4 467.5L501.1 468.4L501.8 469.2L502.5 470.0L503.2 470.4L504.0 470.8L504.8 471.1L505.5 471.5L506.2 471.9L507.0 472.3L507.8 472.7L508.5 473.0L509.2 473.4L510.0 473.8L510.7 474.2L511.5 474.6L512.2 474.9L513.0 475.3L513.7 475.7L514.5 476.1L515.2 476.4L516.0 476.8L516.7 477.2L517.4 477.4L518.1 477.6L518.8 477.8L519.6 478.1L520.3 478.3L521.0 478.5L521.7 478.7L522.7 478.5L523.7 478.3L524.5 478.7L525.2 479.2L526.0 479.6L526.7 480.1L527.5 480.5L528.3 480.7L529.1 480.9L530.0 481.1L530.8 481.3L531.5 480.8L532.3 480.2L533.0 479.7L533.8 479.2L534.5 479.9L535.2 480.6L536.0 481.3L536.7 482.0L537.7 482.6L538.7 483.3L539.5 483.0L540.2 482.8L541.0 482.5L541.7 482.2L542.7 483.2L543.7 484.2" stroke="url(#pal)" stroke-width="1.2" fill="none" stroke-linejoin="round"/>
<path d="M560.0 484.7L564.2 483.3L575.0 482.5L577.0 484.2" stroke="url(#pal)" stroke-width="1.05" fill="none"/>
</g>
<rect x="607.80" y="510.20" width="9.20" height="10.10" fill="#c4c4c4"/>
<g><g transform="translate(612.4 515.3)"><circle r="2.1" fill="none" stroke="#111" stroke-width="1.3"/><g stroke="#111" stroke-width="1.3"><path d="M0 -3.5V3.5M-3.03 -1.75L3.03 1.75M-3.03 1.75L3.03 -1.75"/></g><circle r="1.05" fill="#c4c4c4"/></g></g>
<rect x="618.90" y="130.90" width="143.70" height="388.40" fill="#b8b4b1" rx="2.5"/>
<g fill="none" stroke="#cfcbc7" stroke-width="0.7"><path d="M750.9 134.2h5.2l2 2v6.5h-7.2z"/><path d="M752.2 138.8h4.6v3.2h-4.6z" stroke-width="0.6"/></g>
<rect x="623.40" y="147.90" width="135.60" height="21.40" fill="#e8e8e8"/>
<rect x="623.40" y="147.90" width="135.60" height="0.70" fill="#b4d8e6"/>
<rect x="623.40" y="147.90" width="0.70" height="21.40" fill="#b4d8e6"/>
<rect x="758.30" y="147.90" width="0.70" height="21.40" fill="#b4d8e6"/>
<rect x="666.80" y="147.90" width="0.70" height="21.40" fill="#b4d8e6"/>
<rect x="736.90" y="147.90" width="0.70" height="21.40" fill="#b4d8e6"/>
<rect x="666.80" y="158.40" width="70.10" height="0.70" fill="#b4d8e6"/>
<rect x="692.90" y="158.60" width="0.70" height="10.70" fill="#b4d8e6"/>
<rect x="623.40" y="169.00" width="135.60" height="0.60" fill="#cfe0e8"/>
<rect x="623.40" y="169.60" width="135.60" height="137.20" fill="#e6e6e6"/>
<rect x="666.50" y="169.60" width="1.20" height="137.20" fill="#d2d2d2"/>
<rect x="692.60" y="169.60" width="1.20" height="137.20" fill="#d2d2d2"/>
<rect x="736.60" y="169.60" width="1.20" height="137.20" fill="#d2d2d2"/>
<rect x="623.40" y="169.60" width="0.50" height="137.20" fill="#d0d0d0"/>
<rect x="758.50" y="169.60" width="0.50" height="137.20" fill="#d0d0d0"/>
<g>
<rect x="623.4" y="178.77" width="135.6" height="0.9" fill="#cccccc"/>
<circle cx="748.2" cy="174.41" r="2.05" fill="#9a9a9a" stroke="#595959" stroke-width="1.5"/>
<rect x="623.4" y="188.59" width="135.6" height="0.9" fill="#cccccc"/>
<circle cx="748.2" cy="184.23" r="2.05" fill="#9a9a9a" stroke="#595959" stroke-width="1.5"/>
<rect x="623.4" y="198.41" width="135.6" height="0.9" fill="#cccccc"/>
<circle cx="748.2" cy="194.05" r="2.05" fill="#9a9a9a" stroke="#595959" stroke-width="1.5"/>
<rect x="623.4" y="208.23" width="135.6" height="0.9" fill="#cccccc"/>
<circle cx="748.2" cy="203.87" r="2.05" fill="#9a9a9a" stroke="#595959" stroke-width="1.5"/>
<rect x="623.4" y="218.05" width="135.6" height="0.9" fill="#cccccc"/>
<circle cx="748.2" cy="213.69" r="2.05" fill="#9a9a9a" stroke="#595959" stroke-width="1.5"/>
<rect x="623.4" y="227.87" width="135.6" height="0.9" fill="#cccccc"/>
<circle cx="748.2" cy="223.51" r="2.05" fill="#9a9a9a" stroke="#595959" stroke-width="1.5"/>
<rect x="623.4" y="237.69" width="135.6" height="0.9" fill="#cccccc"/>
<circle cx="748.2" cy="233.33" r="2.05" fill="#9a9a9a" stroke="#595959" stroke-width="1.5"/>
<rect x="623.4" y="247.51" width="135.6" height="0.9" fill="#cccccc"/>
<circle cx="748.2" cy="243.15" r="2.05" fill="#9a9a9a" stroke="#595959" stroke-width="1.5"/>
<rect x="623.4" y="257.33" width="135.6" height="0.9" fill="#cccccc"/>
<circle cx="748.2" cy="252.97" r="2.05" fill="#9a9a9a" stroke="#595959" stroke-width="1.5"/>
<rect x="623.4" y="267.15" width="135.6" height="0.9" fill="#cccccc"/>
<circle cx="748.2" cy="262.79" r="2.05" fill="#9a9a9a" stroke="#595959" stroke-width="1.5"/>
<rect x="623.4" y="276.97" width="135.6" height="0.9" fill="#cccccc"/>
<circle cx="748.2" cy="272.61" r="2.05" fill="#9a9a9a" stroke="#595959" stroke-width="1.5"/>
<rect x="623.4" y="286.79" width="135.6" height="0.9" fill="#cccccc"/>
<circle cx="748.2" cy="282.43" r="2.05" fill="#9a9a9a" stroke="#595959" stroke-width="1.5"/>
<rect x="623.4" y="296.61" width="135.6" height="0.9" fill="#cccccc"/>
<circle cx="748.2" cy="292.25" r="2.05" fill="#9a9a9a" stroke="#595959" stroke-width="1.5"/>
<rect x="623.4" y="306.43" width="135.6" height="0.9" fill="#cccccc"/>
<circle cx="748.2" cy="302.07" r="2.05" fill="#9a9a9a" stroke="#595959" stroke-width="1.5"/>
</g>
<rect x="768.00" y="131.00" width="38.20" height="388.30" fill="#b8b4b1" rx="2.5"/>
<rect x="770.00" y="144.20" width="14.80" height="14.30" fill="#c4c1be"/>
<g><g fill="#111"><path d="M771.5 146.3l4 2l-4 2zM771.5 153.1l4 2l-4 2z"/><g stroke="#111" stroke-width="0.75"><path d="M776 146.7h7M776 148.5h7M776 150.4h7M776 153.4h7M776 155.2h7M776 157h7"/></g></g></g>
<rect x="770.00" y="164.30" width="14.50" height="8.30" fill="#ececec"/>
<rect x="786.10" y="164.30" width="7.80" height="8.30" fill="#c0bdba"/>
<rect x="795.20" y="164.30" width="9.00" height="8.30" fill="#c0bdba"/>
<g><path d="M788.1 166.95h3.8l-1.9 3z" fill="#111"/><path d="M797.8 169.85h3.8l-1.9 -3z" fill="#111"/></g>
<rect x="769.60" y="177.40" width="7.90" height="275.40" fill="#c6c6c6"/>
<g><path d="M772.1 316l2.9 -1.7v3.4z" fill="#444"/></g>
<defs><linearGradient id="pg" x1="0" y1="0" x2="0" y2="1"><stop offset="0" stop-color="#ff0000"/><stop offset="0.075" stop-color="#ff1800"/><stop offset="0.19" stop-color="#ff8c00"/><stop offset="0.28" stop-color="#ffc800"/><stop offset="0.36" stop-color="#ffff00"/><stop offset="0.475" stop-color="#b4ff00"/><stop offset="0.59" stop-color="#00ff00"/><stop offset="0.69" stop-color="#009632"/><stop offset="0.76" stop-color="#0032c8"/><stop offset="0.81" stop-color="#0000ff"/><stop offset="0.92" stop-color="#0000c0"/><stop offset="1" stop-color="#000080"/></linearGradient></defs><rect x="780.8" y="177" width="20.2" height="276.2" fill="url(#pg)"/>
<rect x="770.00" y="458.20" width="14.50" height="8.70" fill="#ececec"/>
<rect x="786.10" y="458.20" width="7.80" height="8.70" fill="#c0bdba"/>
<rect x="795.20" y="458.20" width="9.00" height="8.70" fill="#c0bdba"/>
<g><path d="M788.1 461.05h3.8l-1.9 3z" fill="#111"/><path d="M797.8 463.95h3.8l-1.9 -3z" fill="#111"/></g>
<rect x="770.20" y="472.40" width="14.60" height="14.30" fill="#c0bdba"/>
<rect x="789.80" y="472.40" width="14.40" height="14.30" fill="#c0bdba"/>
<g><path d="M773 477.9h4.4l-2.2 3.1zM777 481h4.6l-2.3 -3.1z" fill="#111"/><rect x="794.1" y="475.3" width="6" height="2.9" fill="#ff1010"/><rect x="794.1" y="478.2" width="6" height="2.9" fill="#108828"/><rect x="794.1" y="481.1" width="6" height="2.9" fill="#0820ff"/></g>
<rect x="770.20" y="498.90" width="14.60" height="14.00" fill="#c0bdba"/>
<rect x="789.80" y="498.90" width="14.40" height="14.00" fill="#c0bdba"/>
<g>
<g id="hand"><circle cx="778.9" cy="506.5" r="2.8" fill="#fff"/><path d="M777.5 505.2h0.9v1.2h0.9v-1.2h0.9v3h-2.7z" fill="#111"/><rect x="777.4" y="506" width="3" height="2.2" rx="0.6" fill="#111"/><circle cx="774" cy="502.8" r="0.95" fill="none" stroke="#2a72d8" stroke-width="0.7"/><circle cx="775.7" cy="504.2" r="0.95" fill="none" stroke="#2a72d8" stroke-width="0.7"/></g>
<g><circle cx="798.5" cy="507" r="3.1" fill="#fff"/><path d="M796.9 505.4h1v1.4h1.2v-1.4h1v3.4h-3.2z" fill="#111"/><rect x="796.8" y="506.4" width="3.4" height="2.5" rx="0.6" fill="#111"/><circle cx="795.6" cy="502.6" r="1" fill="none" stroke="#2a72d8" stroke-width="0.7"/><circle cx="794.2" cy="504" r="1" fill="none" stroke="#2a72d8" stroke-width="0.7"/></g></g>
<rect x="811.20" y="130.70" width="23.90" height="388.60" fill="#106ebe"/>
<g>
<path d="M819.2 139.4h8M819.2 142.4h8M819.2 145.4h8" stroke="#0a0a0a" stroke-width="1.75"/>
<circle cx="823.1" cy="162.5" r="3.8" fill="none" stroke="#0a0a0a" stroke-width="1.6"/><path d="M821.7 159.9l3.7 2.6l-3.7 2.6z" fill="#0a0a0a"/><path d="M823.1 157.6v1.7M823.1 165.7v1.7M818.2 162.5h1.7M826.3 162.5h1.7" stroke="#106ebe" stroke-width="1.1"/>
<rect x="815.9" y="174.8" width="14.8" height="14.6" fill="#b4d2f0"/>
<rect x="815.9" y="194" width="14.8" height="14.6" fill="#b4d2f0"/>
<rect x="815.9" y="213.7" width="14.8" height="14.6" fill="#b4d2f0"/>
<rect x="819.9" y="179" width="6.8" height="6.4" fill="none" stroke="#4a5260" stroke-width="0.7"/><path d="M819.9 181.3h6.8M819.9 183.3h6.8M822.2 179v6.4M824.4 179v6.4" stroke="#5a6472" stroke-width="0.5"/><rect x="819.9" y="179" width="6.8" height="1.1" fill="#3a4048"/>
<ellipse cx="821.9" cy="200.8" rx="3.3" ry="3" fill="#111" transform="rotate(-30 821.9 200.8)"/><path d="M819.6 202.4l3.4-4.6M821.6 203.6l3.2-4.4" stroke="#b4d2f0" stroke-width="0.55"/><path d="M822.6 205l4.8-5.6" stroke="#b4d2f0" stroke-width="2.2"/><path d="M823.4 204l4-4.7" stroke="#111" stroke-width="1.2"/><circle cx="822.7" cy="204.9" r="1" fill="#111"/>
<path d="M820.7 217.4v7.6M822.05 217.4v7.6M823.4 217.4v7.6M824.75 217.4v7.6M826.1 217.4v7.6" stroke="#0a0a0a" stroke-width="0.95"/>
</g>
<rect x="1.20" y="527.80" width="838.80" height="1.80" fill="#e6e0dc"/>
<rect x="1.20" y="529.60" width="838.80" height="0.70" fill="#b8b8b8"/>
<rect x="1.20" y="530.30" width="838.80" height="12.40" fill="#e1e1e1"/>
<rect x="8.30" y="531.00" width="26.70" height="11.20" fill="#d2d2d2"/>
<rect x="23.00" y="531.00" width="0.50" height="11.20" fill="#c4c4c4"/>
<rect x="36.20" y="531.00" width="0.60" height="11.20" fill="#ececec"/>
<rect x="50.00" y="531.00" width="0.60" height="11.20" fill="#ececec"/>
<rect x="63.00" y="531.00" width="0.60" height="11.20" fill="#ececec"/>
<rect x="85.00" y="531.00" width="0.60" height="11.20" fill="#ececec"/>
<g>
<path d="M3.8 534.2v0.9M3.8 536.2v0.9M3.8 538.2v0.9" stroke="#333" stroke-width="0.9"/>
<path d="M11.8 533.4h8.2l-3.2 3.4l3.2 3.4h-8.2l3.2-3.4z" fill="#18d018" stroke="#0a8a0a" stroke-width="0.5"/>
<path d="M26.6 535.2h3.2l-1.6 2.4z" fill="#999"/>
<rect x="38.4" y="533" width="7" height="5.6" rx="0.8" fill="none" stroke="#222" stroke-width="0.9"/><rect x="39.6" y="536.6" width="4.6" height="2.4" fill="#222"/>
<rect x="53.2" y="532.8" width="6.2" height="6.4" fill="none" stroke="#222" stroke-width="0.8" stroke-dasharray="1.6 0.8"/><circle cx="56.3" cy="536" r="1.7" fill="#111"/>
</g>
</svg>
<div class="t" style="left:10.50px;top:89.85px;font-size:5.08px;line-height:6.10px;color:#111;">AMETEK Land LSPro Config (Administrator)</div>
<div class="t" style="left:4.00px;top:101.79px;font-size:5.35px;line-height:6.42px;color:#111;">Configuration</div>
<div class="t" style="left:43.00px;top:101.82px;font-size:5.3px;line-height:6.36px;color:#111;">Data</div>
<div class="t" style="left:60.50px;top:101.88px;font-size:5.2px;line-height:6.24px;color:#111;">Views</div>
<div class="t" style="left:81.00px;top:101.82px;font-size:5.3px;line-height:6.36px;color:#111;">Help</div>
<div class="t" style="left:6.00px;top:117.24px;font-size:5.1px;line-height:6.12px;color:#fff;">Profile Display 1</div>
<div class="t" style="left:203.80px;top:212.94px;font-size:5.1px;line-height:6.12px;color:#222;transform:translateX(-50%);">Zone 1: 616</div>
<div class="t" style="left:260.50px;top:206.64px;font-size:5.1px;line-height:6.12px;color:#222;transform:translateX(-50%);">Zone 2: 529</div>
<div class="t" style="left:317.50px;top:199.94px;font-size:5.1px;line-height:6.12px;color:#222;transform:translateX(-50%);">Zone 3: 523</div>
<div class="t" style="left:374.60px;top:193.94px;font-size:5.1px;line-height:6.12px;color:#222;transform:translateX(-50%);">Zone 4: 528</div>
<div class="t" style="left:431.80px;top:187.84px;font-size:5.1px;line-height:6.12px;color:#222;transform:translateX(-50%);">Zone 5: 609</div>
<div class="t" style="left:45.40px;top:457.72px;font-size:6.3px;line-height:7.56px;color:#111;transform:translateX(-100%);">150</div>
<div class="t" style="left:45.40px;top:410.42px;font-size:6.3px;line-height:7.56px;color:#111;transform:translateX(-100%);">250</div>
<div class="t" style="left:45.40px;top:363.12px;font-size:6.3px;line-height:7.56px;color:#111;transform:translateX(-100%);">350</div>
<div class="t" style="left:45.40px;top:315.82px;font-size:6.3px;line-height:7.56px;color:#111;transform:translateX(-100%);">450</div>
<div class="t" style="left:45.40px;top:268.52px;font-size:6.3px;line-height:7.56px;color:#111;transform:translateX(-100%);">550</div>
<div class="t" style="left:45.40px;top:222.92px;font-size:6.3px;line-height:7.56px;color:#111;transform:translateX(-100%);">650</div>
<div class="t" style="left:72.61px;top:489.46px;font-size:6.4px;line-height:7.68px;color:#111;transform:translateX(-50%);">-36</div>
<div class="t" style="left:99.97px;top:489.46px;font-size:6.4px;line-height:7.68px;color:#111;transform:translateX(-50%);">-32</div>
<div class="t" style="left:127.33px;top:489.46px;font-size:6.4px;line-height:7.68px;color:#111;transform:translateX(-50%);">-28</div>
<div class="t" style="left:154.69px;top:489.46px;font-size:6.4px;line-height:7.68px;color:#111;transform:translateX(-50%);">-24</div>
<div class="t" style="left:182.05px;top:489.46px;font-size:6.4px;line-height:7.68px;color:#111;transform:translateX(-50%);">-20</div>
<div class="t" style="left:209.41px;top:489.46px;font-size:6.4px;line-height:7.68px;color:#111;transform:translateX(-50%);">-16</div>
<div class="t" style="left:236.77px;top:489.46px;font-size:6.4px;line-height:7.68px;color:#111;transform:translateX(-50%);">-12</div>
<div class="t" style="left:264.13px;top:489.46px;font-size:6.4px;line-height:7.68px;color:#111;transform:translateX(-50%);">-8</div>
<div class="t" style="left:291.49px;top:489.46px;font-size:6.4px;line-height:7.68px;color:#111;transform:translateX(-50%);">-4</div>
<div class="t" style="left:318.95px;top:489.46px;font-size:6.4px;line-height:7.68px;color:#111;transform:translateX(-50%);">0</div>
<div class="t" style="left:346.31px;top:489.46px;font-size:6.4px;line-height:7.68px;color:#111;transform:translateX(-50%);">4</div>
<div class="t" style="left:373.67px;top:489.46px;font-size:6.4px;line-height:7.68px;color:#111;transform:translateX(-50%);">8</div>
<div class="t" style="left:401.03px;top:489.46px;font-size:6.4px;line-height:7.68px;color:#111;transform:translateX(-50%);">12</div>
<div class="t" style="left:428.39px;top:489.46px;font-size:6.4px;line-height:7.68px;color:#111;transform:translateX(-50%);">16</div>
<div class="t" style="left:455.75px;top:489.46px;font-size:6.4px;line-height:7.68px;color:#111;transform:translateX(-50%);">20</div>
<div class="t" style="left:483.11px;top:489.46px;font-size:6.4px;line-height:7.68px;color:#111;transform:translateX(-50%);">24</div>
<div class="t" style="left:510.47px;top:489.46px;font-size:6.4px;line-height:7.68px;color:#111;transform:translateX(-50%);">28</div>
<div class="t" style="left:537.83px;top:489.46px;font-size:6.4px;line-height:7.68px;color:#111;transform:translateX(-50%);">32</div>
<div class="t" style="left:565.19px;top:489.46px;font-size:6.4px;line-height:7.68px;color:#111;transform:translateX(-50%);">36</div>
<div class="t" style="left:334.00px;top:499.52px;font-size:5.8px;line-height:6.96px;color:#222;transform:translateX(-50%);">Degrees</div>
<div class="t" style="left:12.9px;top:354.4px;font-size:5.9px;line-height:7px;color:#222;transform:translate(-50%,-50%) rotate(-90deg);">Temp. C</div>
<div class="t" style="left:5.60px;top:500.94px;font-size:6.1px;line-height:7.32px;color:#222;">Operator Side</div>
<div class="t" style="left:592.80px;top:500.94px;font-size:6.1px;line-height:7.32px;color:#222;">Far Side</div>
<div class="t" style="left:5.60px;top:512.72px;font-size:6.3px;line-height:7.56px;color:#222;">entry Mulpic&nbsp;&nbsp;( Z7475 ) IP: 127.0.0.1</div>
<div class="t" style="left:119.50px;top:512.72px;font-size:6.3px;line-height:7.56px;color:#222;">Line: 29346</div>
<div class="t" style="left:168.00px;top:512.72px;font-size:6.3px;line-height:7.56px;color:#222;">88,93 Hz</div>
<div class="t" style="left:215.00px;top:512.72px;font-size:6.3px;line-height:7.56px;color:#222;">22&deg;C</div>
<div class="t" style="left:549.50px;top:514.54px;font-size:4.6px;line-height:5.52px;color:#333;">X:</div>
<div class="t" style="left:569.80px;top:514.54px;font-size:4.6px;line-height:5.52px;color:#333;">T:</div>
<div class="t" style="left:691.40px;top:134.32px;font-size:6.3px;line-height:7.56px;color:#111;font-weight:bold;transform:translateX(-50%);">Analysis</div>
<div class="t" style="left:645.10px;top:155.62px;font-size:5.3px;line-height:6.36px;color:#111;font-weight:bold;transform:translateX(-50%);">Name</div>
<div class="t" style="left:701.85px;top:150.60px;font-size:5.0px;line-height:6.00px;color:#111;font-weight:bold;transform:translateX(-50%);">Temperatures</div>
<div class="t" style="left:679.85px;top:161.90px;font-size:5.0px;line-height:6.00px;color:#111;font-weight:bold;transform:translateX(-50%);">&deg;C</div>
<div class="t" style="left:714.90px;top:161.90px;font-size:5.0px;line-height:6.00px;color:#111;font-weight:bold;transform:translateX(-50%);">Processing</div>
<div class="t" style="left:747.95px;top:155.62px;font-size:5.3px;line-height:6.36px;color:#111;font-weight:bold;transform:translateX(-50%);">Alarm</div>
<div class="t" style="left:645.10px;top:171.87px;font-size:5.4px;line-height:6.48px;color:#111;transform:translateX(-50%);">Zone 1</div>
<div class="t" style="left:679.85px;top:171.87px;font-size:5.4px;line-height:6.48px;color:#111;transform:translateX(-50%);">616</div>
<div class="t" style="left:714.90px;top:171.87px;font-size:5.4px;line-height:6.48px;color:#111;transform:translateX(-50%);">Peak</div>
<div class="t" style="left:645.10px;top:181.69px;font-size:5.4px;line-height:6.48px;color:#111;transform:translateX(-50%);">Zone 2</div>
<div class="t" style="left:679.85px;top:181.69px;font-size:5.4px;line-height:6.48px;color:#111;transform:translateX(-50%);">529</div>
<div class="t" style="left:714.90px;top:181.69px;font-size:5.4px;line-height:6.48px;color:#111;transform:translateX(-50%);">Peak</div>
<div class="t" style="left:645.10px;top:191.51px;font-size:5.4px;line-height:6.48px;color:#111;transform:translateX(-50%);">Zone 3</div>
<div class="t" style="left:679.85px;top:191.51px;font-size:5.4px;line-height:6.48px;color:#111;transform:translateX(-50%);">523</div>
<div class="t" style="left:714.90px;top:191.51px;font-size:5.4px;line-height:6.48px;color:#111;transform:translateX(-50%);">Peak</div>
<div class="t" style="left:645.10px;top:201.33px;font-size:5.4px;line-height:6.48px;color:#111;transform:translateX(-50%);">Zone 4</div>
<div class="t" style="left:679.85px;top:201.33px;font-size:5.4px;line-height:6.48px;color:#111;transform:translateX(-50%);">528</div>
<div class="t" style="left:714.90px;top:201.33px;font-size:5.4px;line-height:6.48px;color:#111;transform:translateX(-50%);">Peak</div>
<div class="t" style="left:645.10px;top:211.15px;font-size:5.4px;line-height:6.48px;color:#111;transform:translateX(-50%);">Zone 5</div>
<div class="t" style="left:679.85px;top:211.15px;font-size:5.4px;line-height:6.48px;color:#111;transform:translateX(-50%);">609</div>
<div class="t" style="left:714.90px;top:211.15px;font-size:5.4px;line-height:6.48px;color:#111;transform:translateX(-50%);">Peak</div>
<div class="t" style="left:645.10px;top:220.97px;font-size:5.4px;line-height:6.48px;color:#111;transform:translateX(-50%);">Zone 6</div>
<div class="t" style="left:679.85px;top:220.97px;font-size:5.4px;line-height:6.48px;color:#111;transform:translateX(-50%);">100</div>
<div class="t" style="left:714.90px;top:220.97px;font-size:5.4px;line-height:6.48px;color:#111;transform:translateX(-50%);">Off</div>
<div class="t" style="left:645.10px;top:230.79px;font-size:5.4px;line-height:6.48px;color:#111;transform:translateX(-50%);">Zone 7</div>
<div class="t" style="left:679.85px;top:230.79px;font-size:5.4px;line-height:6.48px;color:#111;transform:translateX(-50%);">100</div>
<div class="t" style="left:714.90px;top:230.79px;font-size:5.4px;line-height:6.48px;color:#111;transform:translateX(-50%);">Off</div>
<div class="t" style="left:645.10px;top:240.61px;font-size:5.4px;line-height:6.48px;color:#111;transform:translateX(-50%);">Zone 8</div>
<div class="t" style="left:679.85px;top:240.61px;font-size:5.4px;line-height:6.48px;color:#111;transform:translateX(-50%);">100</div>
<div class="t" style="left:714.90px;top:240.61px;font-size:5.4px;line-height:6.48px;color:#111;transform:translateX(-50%);">Off</div>
<div class="t" style="left:645.10px;top:250.43px;font-size:5.4px;line-height:6.48px;color:#111;transform:translateX(-50%);">Zone 9</div>
<div class="t" style="left:679.85px;top:250.43px;font-size:5.4px;line-height:6.48px;color:#111;transform:translateX(-50%);">100</div>
<div class="t" style="left:714.90px;top:250.43px;font-size:5.4px;line-height:6.48px;color:#111;transform:translateX(-50%);">Off</div>
<div class="t" style="left:645.10px;top:260.25px;font-size:5.4px;line-height:6.48px;color:#111;transform:translateX(-50%);">Zone 10</div>
<div class="t" style="left:679.85px;top:260.25px;font-size:5.4px;line-height:6.48px;color:#111;transform:translateX(-50%);">100</div>
<div class="t" style="left:714.90px;top:260.25px;font-size:5.4px;line-height:6.48px;color:#111;transform:translateX(-50%);">Off</div>
<div class="t" style="left:645.10px;top:270.07px;font-size:5.4px;line-height:6.48px;color:#111;transform:translateX(-50%);">Zone 11</div>
<div class="t" style="left:679.85px;top:270.07px;font-size:5.4px;line-height:6.48px;color:#111;transform:translateX(-50%);">100</div>
<div class="t" style="left:714.90px;top:270.07px;font-size:5.4px;line-height:6.48px;color:#111;transform:translateX(-50%);">Off</div>
<div class="t" style="left:645.10px;top:279.89px;font-size:5.4px;line-height:6.48px;color:#111;transform:translateX(-50%);">Zone 12</div>
<div class="t" style="left:679.85px;top:279.89px;font-size:5.4px;line-height:6.48px;color:#111;transform:translateX(-50%);">100</div>
<div class="t" style="left:714.90px;top:279.89px;font-size:5.4px;line-height:6.48px;color:#111;transform:translateX(-50%);">Off</div>
<div class="t" style="left:645.10px;top:289.71px;font-size:5.4px;line-height:6.48px;color:#111;transform:translateX(-50%);">Zone 13</div>
<div class="t" style="left:679.85px;top:289.71px;font-size:5.4px;line-height:6.48px;color:#111;transform:translateX(-50%);">100</div>
<div class="t" style="left:714.90px;top:289.71px;font-size:5.4px;line-height:6.48px;color:#111;transform:translateX(-50%);">Off</div>
<div class="t" style="left:645.10px;top:299.53px;font-size:5.4px;line-height:6.48px;color:#111;transform:translateX(-50%);">Zone 14</div>
<div class="t" style="left:679.85px;top:299.53px;font-size:5.4px;line-height:6.48px;color:#111;transform:translateX(-50%);">100</div>
<div class="t" style="left:714.90px;top:299.53px;font-size:5.4px;line-height:6.48px;color:#111;transform:translateX(-50%);">Off</div>
<div class="t" style="left:787.00px;top:133.38px;font-size:5.2px;line-height:6.24px;color:#111;font-weight:bold;transform:translateX(-50%);">Palette</div>
<div class="t" style="left:777.20px;top:165.57px;font-size:5.3px;line-height:6.36px;color:#222;transform:translateX(-50%);">650</div>
<div class="t" style="left:777.20px;top:459.67px;font-size:5.3px;line-height:6.36px;color:#222;transform:translateX(-50%);">100</div>
<div class="t" style="left:67.30px;top:533.66px;font-size:4.9px;line-height:5.88px;color:#333;">0 Error</div>
</body></html>
